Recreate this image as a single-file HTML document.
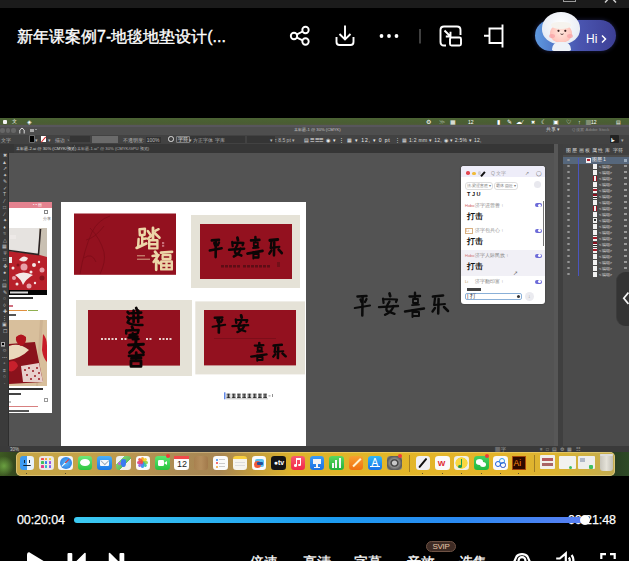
<!DOCTYPE html>
<html><head><meta charset="utf-8">
<style>
*{margin:0;padding:0;box-sizing:border-box}
html,body{width:629px;height:561px;overflow:hidden;background:#000;font-family:"Liberation Sans",sans-serif}
.a{position:absolute}
#top{left:0;top:0;width:629px;height:8px;background:#1b1b1b}
#title{left:17px;top:26.5px;color:#fff;font-size:16px;line-height:20px;white-space:nowrap;-webkit-text-stroke:0.35px #fff}
#ctrl{left:0;top:476px;width:629px;height:85px;background:#000}

#hi{left:530px;top:8px;width:90px;height:50px}
#hipill{left:5px;top:12px;width:81px;height:31px;border-radius:16px;background:linear-gradient(90deg,#5f9ae0 0%,#4f76c8 25%,#4a55b0 55%,#3d3f95 100%);box-shadow:0 0 4px rgba(80,90,200,.35)}
#hood{left:12px;top:4px;width:38px;height:32px;border-radius:50% 50% 45% 45%;background:radial-gradient(circle at 50% 40%,#ffffff,#e9edf5 70%,#cfd6e6)}
#face{left:20px;top:16px;width:22px;height:19px;border-radius:50%;background:radial-gradient(circle at 50% 45%,#ffe6dc,#ffc9c0 60%,#f6a8a6)}
#body{left:22px;top:34px;width:19px;height:9px;border-radius:8px 8px 2px 2px;background:#eef2f8}
#hitext{left:56px;top:24px;color:#fff;font-size:12px;line-height:14px}

#t1{left:17px;top:37px;color:#fff;font-size:12.5px;line-height:14px;letter-spacing:-0.1px;-webkit-text-stroke:0.25px #fff}
#t2{left:568px;top:37px;color:#fff;font-size:12.5px;line-height:14px;letter-spacing:-0.1px;-webkit-text-stroke:0.25px #fff}
#bar{left:74px;top:41px;width:512px;height:5.5px;border-radius:3px;background:linear-gradient(90deg,#3ccaf2 0%,#1c9cf0 50%,#2a8af2 75%,#5a7ef2 100%)}
#knob{left:579.5px;top:39px;width:10px;height:10px;border-radius:50%;background:#fff}
.lbl{top:78px;color:#fff;font-size:14px;line-height:16px;white-space:nowrap;-webkit-text-stroke:0.3px #fff}
#svip{left:426px;top:65px;width:30px;height:11px;border-radius:6px;background:#3e2b24;border:1px solid #6e5244;color:#e8c8a8;font-size:8px;line-height:9px;text-align:center;letter-spacing:-0.3px}

.mb{color:#fff;font-size:5.5px;line-height:8px}
.mbr{top:117.5px;color:#fff;font-size:5.5px;line-height:8px}
.dot{top:128px;width:4.5px;height:4.5px;border-radius:50%;background:#666}
.ob{top:136.5px;color:#b8b8b8;font-size:4.5px;line-height:6px}
.tiny{font-size:5px;line-height:6px;white-space:nowrap}
#dock{left:16px;top:452px;width:599px;height:23.5px;border-radius:5px;background:linear-gradient(90deg,#c6a645 0%,#c4a248 12%,#b89450 20%,#aa8a55 28%,#a88652 34%,#c49e3c 40%,#dcb22c 46%,#e2b628 60%,#e4b42a 80%,#dcb432 90%,#c2ac52 100%);box-shadow:inset 0 0 0 0.8px rgba(255,240,190,.45)}

.tog{left:73.5px;width:7px;height:4px;border-radius:2px;background:#6c6ad8}
.tog::after{content:"";position:absolute;left:3.5px;top:0.5px;width:3px;height:3px;border-radius:50%;background:#fff}

.di{top:455.5px;width:14.6px;height:14.6px;border-radius:3.3px;overflow:visible}
.badge{width:4px;height:4px;border-radius:50%;background:#f03a3a}
.tg{left:0.5px;width:8px;color:#c8c8c8;font-size:5px;line-height:5px;text-align:center;overflow:hidden}
</style></head><body>
<div class="a" id="top"></div>
<div class="a" style="left:563px;top:0;width:13px;height:2px;border:1px solid #9a9a9a;border-top:none"></div>
<svg class="a" style="left:600px;top:0" width="20" height="8"><path d="M10.5 -3.5 L5 2.5 M10.5 -3.5 L16 2.5" stroke="#ccc" stroke-width="1.5" fill="none"/></svg>

<svg class="a" style="left:0;top:0" width="629" height="118" viewBox="0 0 629 118">
  <g fill="none" stroke="#fff" stroke-width="1.9">
    <circle cx="294" cy="36" r="3.2"/><circle cx="305.5" cy="30" r="3.2"/><circle cx="305.5" cy="41.5" r="3.2"/>
    <path d="M297 34.3 L302.6 31.5 M297 37.7 L302.6 40.3"/>
    <path d="M345 25.5 V39.5 M339.5 34 L345 39.5 L350.5 34"/>
    <path d="M336.5 37 V42 Q336.5 45 339.5 45 H350.5 Q353.5 45 353.5 42 V37"/>
  </g>
  <g fill="#fff"><circle cx="381.5" cy="36" r="1.9"/><circle cx="389" cy="36" r="1.9"/><circle cx="396.5" cy="36" r="1.9"/></g>
  <rect x="419.3" y="29" width="1.4" height="14.5" fill="#5a5a5a"/>
  <g fill="none" stroke="#fff" stroke-width="1.9">
    <path d="M446 45.5 H444 Q440.5 45.5 440.5 42 V30 Q440.5 26.5 444 26.5 H457 Q460.5 26.5 460.5 30 V35"/>
    <rect x="450" y="37.5" width="11" height="8" rx="1.5"/>
    <path d="M444.5 30.5 L450.5 36.5 M450.5 31.8 V36.5 H445.8"/>
    <path d="M502.5 24.5 V47.5 M502.5 28.5 H489.5 V43 H502.5 M484 35.8 H489.5"/>
  </g>
</svg>
<div class="a" id="hi">
  <div class="a" id="hipill"></div>
  <div class="a" id="hood"></div>
  <div class="a" id="face"></div>
  <div class="a" id="body"></div>
  <div class="a" style="left:21px;top:14px;width:20px;height:7px;border-radius:40% 40% 50% 50%;background:#f6f3ee"></div>
  <div class="a" style="left:19px;top:26px;width:6px;height:4px;border-radius:50%;background:#f79aa0;opacity:.6"></div><div class="a" style="left:37px;top:26px;width:6px;height:4px;border-radius:50%;background:#f79aa0;opacity:.6"></div>
  <svg class="a" style="left:0;top:0" width="90" height="50" viewBox="0 0 90 50">
    <circle cx="28.5" cy="22.8" r="1.1" fill="#3a2020"/><circle cx="35.3" cy="22.8" r="1.1" fill="#3a2020"/>
    <path d="M30.5 25.8 Q32 27.3 33.5 25.8" stroke="#3a2020" stroke-width="0.8" fill="none"/>
  </svg>
  <div class="a" id="hitext">Hi</div>
  <svg class="a" style="left:0;top:0" width="90" height="50"><path d="M72 27.5 L75.5 31 L72 34.5" stroke="#fff" stroke-width="1.5" fill="none"/></svg>
</div>
<div class="a" id="title">新年课案例7-地毯地垫设计(...</div>

<div class="a" id="screen">
  <!-- menubar -->
  <div class="a" style="left:0;top:117.5px;width:629px;height:7.5px;background:linear-gradient(#4b6334,#4a5d32 70%,#4f5a3c)"></div>
  <div class="a" style="left:0;top:125px;width:629px;height:1.5px;background:#58565c"></div>
  <div class="a" style="left:3px;top:119.5px;width:3.5px;height:4px;border-radius:1px;background:#f4f4f4"></div>
  <div class="a mb" style="left:12px;top:118px;font-size:4.8px">文件</div>
  <div class="a mb" style="left:27px;top:117.5px;">&#9672;</div>
  <div class="a mbr" style="left:426px">&#9881;</div>
  <div class="a mbr" style="left:439px;color:#9aaa90">&#8811;</div>
  <div class="a mbr" style="left:450px">&#9638;</div>
  <div class="a mbr" style="left:468px;font-size:5px">12月12日</div>
  <div class="a mbr" style="left:497px">&#9646;</div>
  <div class="a mbr" style="left:507px">&#9998;</div>
  <div class="a mbr" style="left:516px">&#9729;&#8260;</div>
  <div class="a mbr" style="left:531px;font-size:5px">&#10006;</div>
  <div class="a mbr" style="left:541px">&#9790;</div>
  <div class="a mbr" style="left:553px">&#9635;</div>
  <div class="a mbr" style="left:566px">&#9825;</div>
  <div class="a mbr" style="left:578px">&#8593;</div>
  <div class="a mbr" style="left:586px;font-size:5px">&#9636;12月12</div>
  <div class="a mbr" style="left:616px;font-size:5px">&#9636;</div>
  <!-- title bar -->
  <div class="a" style="left:0;top:126.5px;width:629px;height:8px;background:#4e4e4e"></div>
  <div class="a dot" style="left:0px"></div><div class="a dot" style="left:5.5px"></div><div class="a dot" style="left:11px"></div>
  <svg class="a" style="left:18.5px;top:127px" width="6" height="7"><path d="M0.8 6.5 V3 L3 1 L5.2 3 V6.5" fill="none" stroke="#ddd" stroke-width="1"/></svg>
  <div class="a" style="left:29.5px;top:128.5px;width:4.5px;height:3.5px;background:#a8a8a8"></div>
  <div class="a" style="left:35px;top:129px;width:2px;height:1px;background:#999"></div>
  <div class="a tiny" style="left:294px;top:126.5px;color:#c8c8c8;font-size:4.2px">未标题-1 @ 30% (CMYK)</div>
  <div class="a tiny" style="left:546px;top:126.5px;color:#d8d8d8;font-size:4.5px">共享 &#9662;</div>
  <div class="a tiny" style="left:572px;top:126.5px;color:#8a8a8a;font-size:4.2px">Q 搜索 Adobe Stock</div>
  <!-- options bar -->
  <div class="a" style="left:0;top:134.5px;width:629px;height:9px;background:#424242"></div>
  <div class="a tiny ob" style="left:0.5px">文字</div>
  <div class="a" style="left:29.5px;top:136px;width:4px;height:6px;background:#000;box-shadow:0 0 0 0.6px #888"></div>
  <div class="a tiny ob" style="left:35px">&#9662;</div>
  <div class="a" style="left:41px;top:136px;width:5px;height:6px;background:#fff"></div>
  <div class="a" style="left:43.2px;top:135.5px;width:0.9px;height:7px;background:#d22;transform:rotate(40deg)"></div>
  <div class="a tiny ob" style="left:48px">&#9662;</div>
  <div class="a tiny ob" style="left:55px">描边 &#9684;</div>
  <div class="a" style="left:70px;top:136px;width:20px;height:6px;background:#353535"></div>
  <div class="a" style="left:92px;top:135.5px;width:26px;height:7.5px;background:#6a6a6a"></div>
  <div class="a tiny ob" style="left:123px">不透明度: <span style="background:#333;padding:0 1px">100%</span></div>
  <div class="a" style="left:168px;top:136px;width:5.5px;height:5.5px;border-radius:50%;border:1px solid #ddd"></div>
  <div class="a tiny ob" style="left:177px;box-shadow:0 0 0 0.6px #aaa;color:#eee;padding:0 1px;line-height:5px;top:136.5px">字符</div>
  <div class="a" style="left:190px;top:135.5px;width:55px;height:7px;background:#353535"></div>
  <div class="a tiny ob" style="left:189px">&#9662; 方正字体 字库</div>
  <div class="a" style="left:247px;top:135.5px;width:28px;height:7px;background:#353535"></div>
  <div class="a tiny ob" style="left:270px">&#9662; &#8597; 8.5 pt &#9662;</div>
  <div class="a tiny ob" style="left:304px;color:#eee;letter-spacing:0.8px">&#9636;&#9776;&#9776;&#9776; &#9673; &#9662; &#8942; &#9638; &#9662; 12, &#9662; 0 pt</div>
  <div class="a tiny ob" style="left:395px;color:#ddd;letter-spacing:0.3px">&#8942; &#9638; 1:2 mm &#9662; 12, &#9673; &#9662; 2:5% &#9662; 12,</div>
  <div class="a" style="left:610px;top:134.5px;width:9px;height:8px;background:#222;border-radius:1px"></div>
  <div class="a tiny ob" style="left:611px;color:#fff;font-weight:bold">I&#9656;</div>
  <div class="a tiny ob" style="left:621px;color:#aaa">&#9662;</div>
  <!-- tab bar -->
  <div class="a" style="left:0;top:143.5px;width:629px;height:9px;background:#363636"></div>
  <div class="a" style="left:14px;top:143.5px;width:58px;height:9px;background:#3a3a3a"></div>
  <div class="a tiny" style="left:16px;top:146px;color:#d8d8d8;font-size:4.2px">未标题-2.ai @ 30% (CMYK/预览)</div>
  <div class="a tiny" style="left:69px;top:146px;color:#aaa;font-size:4.2px">&#215;</div>
  <div class="a" style="left:74px;top:145px;width:0.6px;height:6px;background:#555"></div>
  <div class="a tiny" style="left:77px;top:146px;color:#b0b0b0;font-size:4.2px">未标题-1.ai* @ 30% (CMYK/GPU 预览)</div>
  <!-- canvas -->
  <div class="a" style="left:9px;top:152.5px;width:549px;height:293.5px;background:#535353"></div>
  <!-- tools -->
  <div class="a" style="left:0;top:152.5px;width:9px;height:293.5px;background:#3b3b3b;border-right:1px solid #2e2e2e"></div>
  <div class="a tg" style="top:153.0px">&#10006;</div>
  <div class="a tg" style="top:159.5px">&#9650;</div>
  <div class="a tg" style="top:166.0px">&#10138;</div>
  <div class="a tg" style="top:172.5px">&#10022;</div>
  <div class="a tg" style="top:179.0px">&#9998;</div>
  <div class="a tg" style="top:185.5px">&#10003;</div>
  <div class="a tg" style="top:192.0px">T</div>
  <div class="a tg" style="top:198.5px">&#8260;</div>
  <div class="a tg" style="top:205.0px">&#9633;</div>
  <div class="a tg" style="top:211.5px">&#8725;</div>
  <div class="a tg" style="top:218.0px">&#10022;</div>
  <div class="a tg" style="top:224.5px">&#9830;</div>
  <div class="a tg" style="top:231.0px">&#8776;</div>
  <div class="a tg" style="top:237.5px">&#9651;</div>
  <div class="a tg" style="top:244.0px">&#9638;</div>
  <div class="a tg" style="top:250.5px">&#8723;</div>
  <div class="a tg" style="top:257.0px">&#9633;</div>
  <div class="a tg" style="top:263.5px">&#10070;</div>
  <div class="a tg" style="top:270.0px">&#9679;</div>
  <div class="a tg" style="top:276.5px">&#8596;</div>
  <div class="a tg" style="top:283.0px">&#9636;</div>
  <div class="a tg" style="top:289.5px">&#9998;</div>
  <div class="a tg" style="top:296.0px">&#9675;</div>
  <div class="a tg" style="top:302.5px">&#9674;</div>
  <div class="a tg" style="top:309.0px">&#10010;</div>
  <div class="a tg" style="top:315.5px">&#8942;</div>
  <div class="a tg" style="top:322.0px">&#9635;</div>
  <div class="a tg" style="top:328.5px">&#9744;</div>
  <div class="a tg" style="top:348.0px">&#9786;</div>
  <div class="a tg" style="top:354.5px">&#8943;</div>
  <div class="a tg" style="top:361.0px">&#9643;</div>
  <div class="a tg" style="top:367.5px">&#8801;</div>
  <div class="a tg" style="top:374.0px">&#9675;</div>
  <div class="a tg" style="top:380.5px">&#183;</div>
  <div class="a" style="left:1px;top:343px;width:4px;height:4px;background:#fff;border:0.5px solid #888"></div>
  <div class="a" style="left:0.5px;top:341.5px;width:4px;height:4px;background:#000;border:0.5px solid #aaa"></div>

  <!-- left panel -->
  <div class="a" style="left:9px;top:202px;width:43px;height:211px;background:#fff"></div>
  <div class="a" style="left:9px;top:202px;width:43px;height:6px;background:#e4828f"></div>
  <div class="a tiny" style="left:33px;top:202px;color:#fff;font-size:4px">&#8226; &#8226; &#9636;</div>
  <div class="a" style="left:44px;top:210px;width:4px;height:4px;border:1px solid #888"></div>
  <div class="a tiny" style="left:43px;top:216px;color:#777;font-size:4px">分享</div>
  <svg class="a" style="left:9px;top:228px" width="38" height="67" viewBox="0 0 38 67">
    <rect width="38" height="62" fill="#dcd9d6"/>
    <path d="M30 0 H38 V62 H30Z" fill="#c9c0b2"/>
    <path d="M0 0 H30 L29 25 L0 21Z" fill="#e6e3e0"/>
    <path d="M0 23 L29 26.5 L38 29 V62 H0Z" fill="#b8202a"/>
    <path d="M0 22.5 L29.5 26.5 L31.5 1" fill="none" stroke="#2a2222" stroke-width="1.6"/>
    <g fill="#f4e8e6">
      <path d="M10 32 Q14 26 19 30 Q17 36 10 32Z"/>
      <path d="M0 29 h3 v6 h-3z"/>
      <path d="M6 47 Q14 42 24 47 Q17 51 14 57 Q12 51 6 47Z"/>
      <circle cx="22" cy="44" r="1.5"/><circle cx="25" cy="37" r="2"/><circle cx="4" cy="40" r="1.5"/>
      <circle cx="30" cy="34" r="1.2"/><circle cx="8" cy="56" r="1.5"/><circle cx="26" cy="55" r="1.2"/>
    </g>
    <g fill="#e8a0a8"><circle cx="15" cy="39" r="3.5"/><circle cx="33" cy="42" r="2.5"/><circle cx="20" cy="58" r="2.5"/><circle cx="5" cy="50" r="2"/></g>
    <g fill="#7e1018" opacity=".85"><circle cx="33" cy="50" r="2.5"/><circle cx="9" cy="37" r="1.5"/></g>
    <g fill="#f6f0f0" opacity=".45"><rect x="1" y="7" width="6" height="4"/></g>
    <rect y="62" width="38" height="5" fill="#050505"/>
    <rect x="1" y="63.5" width="18" height="2" fill="#d8d8d8"/>
  </svg>
  <div class="a" style="left:9px;top:297px;width:24px;height:2px;background:#333"></div>
  <div class="a" style="left:9px;top:305px;width:4px;height:1.5px;background:#d07080"></div>
  <div class="a" style="left:9px;top:309.5px;width:18px;height:1.5px;background:#e09040"></div>
  <div class="a" style="left:28px;top:309.5px;width:10px;height:1.5px;background:#90b050"></div>
  <div class="a" style="left:9px;top:314px;width:7px;height:1.5px;background:#555"></div>
  <svg class="a" style="left:9px;top:320px" width="38" height="67" viewBox="0 0 38 67">
    <rect width="38" height="66" fill="#d8bf9c"/>
    <path d="M31 0 L34 0 L29 66 H27Z" fill="#c4a888" opacity=".5"/>
    <path d="M0 24 L26 22 L34 62 L0 64 Z" fill="#8a121c"/>
    <path d="M0 26 Q10 22 20 30 Q12 38 0 40Z" fill="#ead8bc"/>
    <path d="M0 42 Q7 39 9 46 Q5 53 0 51Z" fill="#c8202c"/>
    <path d="M12 46 L30 43 L34 62 L14 62Z" fill="#e8d0cc"/>
    <g fill="#9a1822"><circle cx="16" cy="50" r="1"/><circle cx="20" cy="48" r="1"/><circle cx="24" cy="51" r="1"/><circle cx="28" cy="48" r="1"/><circle cx="18" cy="55" r="1"/><circle cx="26" cy="56" r="1"/><circle cx="22" cy="59" r="1"/><circle cx="30" cy="53" r="1"/><circle cx="30" cy="59" r="1"/></g>
    <path d="M7 17 Q12 12 17 17 Q18 24 12 26 Q6 23 7 17Z" fill="#b0141e"/>
    <path d="M34 14 Q38 18 38 26 V42 Q34 38 33 30Z" fill="#c81c28"/>
  </svg>
  <div class="a" style="left:9px;top:388px;width:34px;height:2px;background:#333"></div>
  <div class="a" style="left:9px;top:392.5px;width:12px;height:2px;background:#444"></div>
  <div class="a" style="left:44px;top:398px;width:4px;height:4px;border:1px solid #999"></div>
  <div class="a" style="left:9px;top:401px;width:2px;height:1.5px;background:#bbb"></div>
  <div class="a" style="left:9px;top:405.5px;width:29px;height:1.5px;background:#d88080"></div>
  <div class="a" style="left:9px;top:410px;width:20px;height:2px;background:#555"></div>

  <!-- artboard -->
  <div class="a" style="left:61px;top:202px;width:245px;height:244px;background:#fff"></div>
  <svg class="a" style="left:0;top:0" width="629" height="561" viewBox="0 0 629 561">
    <defs>
      <g id="pa" fill="none" stroke-linecap="round" stroke-linejoin="round">
        <path d="M3.5 5.5 L12.5 5" style="stroke-width:calc(var(--k,1)*3.24px)"/>
        <path d="M6.5 8.5 L7.5 11 M12.5 8 L11 11" style="stroke-width:calc(var(--k,1)*2.97px)"/>
        <path d="M0.8 17 L16 14.5" style="stroke-width:calc(var(--k,1)*2.70px)"/>
        <path d="M8.6 6 L8.3 24.5" style="stroke-width:calc(var(--k,1)*3.24px)"/>
        <path d="M35.5 2.5 L36.2 5.2" style="stroke-width:calc(var(--k,1)*3.51px)"/>
        <path d="M29 7.5 L29.6 12 M29.6 8 L43 8.5 L42 11" style="stroke-width:calc(var(--k,1)*2.84px)"/>
        <path d="M25 16.2 L44 15" style="stroke-width:calc(var(--k,1)*2.97px)"/>
        <path d="M35.5 10.5 Q31 17 33 20 L40.5 22.8" style="stroke-width:calc(var(--k,1)*2.97px)"/>
        <path d="M39.5 15 Q38 21 31 23.8" style="stroke-width:calc(var(--k,1)*2.97px)"/>
      </g>
      <g id="xl" fill="none" stroke-linecap="round" stroke-linejoin="round">
        <path d="M11 1.8 L11 6 M5.5 5.5 L16 5" style="stroke-width:calc(var(--k,1)*3.10px)"/>
        <path d="M9 8 h5 v4 h-5z" style="stroke-width:calc(var(--k,1)*2.29px)"/>
        <path d="M8 14.2 L15 13.6" style="stroke-width:calc(var(--k,1)*2.29px)"/>
        <path d="M1 20.5 L20 17.5" style="stroke-width:calc(var(--k,1)*3.10px)"/>
        <path d="M8.5 19 V26 M8.5 21 H15 V25 H9" style="stroke-width:calc(var(--k,1)*2.56px)"/>
        <path d="M29 5.5 L39 4.5" style="stroke-width:calc(var(--k,1)*3.51px)"/>
        <path d="M31 7 L30.2 14" style="stroke-width:calc(var(--k,1)*2.84px)"/>
        <path d="M30.2 14 L41 13" style="stroke-width:calc(var(--k,1)*2.56px)"/>
        <path d="M34.6 8 L34.2 22.5" style="stroke-width:calc(var(--k,1)*3.24px)"/>
        <path d="M28.5 20.5 L31 17" style="stroke-width:calc(var(--k,1)*3.10px)"/>
        <path d="M40 16 L44 20" style="stroke-width:calc(var(--k,1)*3.24px)"/>
      </g>
    </defs>
    <!-- card 1 -->
    <rect x="74" y="213.5" width="102" height="61.3" fill="#93111f"/>
    <g fill="none" stroke="#7e0c18" stroke-width="0.94" opacity=".9">
      <path d="M80 274 Q84 250 92 232 Q98 220 110 216 M86 240 Q95 238 104 226 M90 228 Q100 238 104 252 Q106 262 100 274 M84 258 Q92 252 96 262"/>
    </g>
    <g fill="none" stroke="#ecd6a8" stroke-linecap="round" stroke-linejoin="round">
      <path d="M139.5 229.2 L145 228.8 L144.6 234.8 L139.8 235.2 Z" stroke-width="2.4"/>
      <path d="M142.2 235.5 V244 M142.6 239 L146 238.5" stroke-width="2.4"/>
      <path d="M138.6 239 L138.2 246" stroke-width="2.5"/>
      <path d="M136.8 247.8 L146.2 243.5" stroke-width="3"/>
      <path d="M153 228 V239" stroke-width="2.8"/>
      <path d="M147.8 231 L151 235.5 M155.2 230.8 L158.6 229.2" stroke-width="2.5"/>
      <path d="M154.6 233 L159.5 237.8 M148 238.6 L151.5 235.5" stroke-width="2.6"/>
      <path d="M149.2 240.2 H157.4 V248.4 H149.2 Z M149.6 244.2 H157" stroke-width="2.4"/>
      <path d="M155 251.8 L156.6 253.6" stroke-width="2.8"/>
      <path d="M152.6 256 L158.6 255 L153.6 262" stroke-width="2.5"/>
      <path d="M156.2 259 V269.8 M157.6 261 L159.2 263.2" stroke-width="2.7"/>
      <path d="M161 252.6 L172 251.9" stroke-width="2.8"/>
      <path d="M162.6 255.2 H170.4 V259 H162.6 Z" stroke-width="2.3"/>
      <path d="M161.2 261.5 H171.8 V269.4 H161.2 Z M166.5 261.5 V269.4 M161.6 265.5 H171.4" stroke-width="2.4"/>
    </g>
    <g fill="#ecd6a8" opacity=".75"><rect x="137" y="255.3" width="8" height="1"/><rect x="137" y="258.7" width="13" height="1"/></g>
    <g fill="#c8707a"><rect x="162" y="242" width="2.2" height="2"/><rect x="162" y="244.8" width="2.2" height="2"/></g>
    <!-- card 2 -->
    <rect x="191" y="215" width="109" height="73" fill="#e5e2d7"/>
    <rect x="200" y="224" width="92" height="55" fill="#93111f"/>
    <g stroke="#0d0606" transform="translate(209 235.5) scale(0.8 0.88)"><use href="#pa"/><use href="#xl" x="47"/></g>
    <g fill="#2a0a0c" opacity=".5"><rect x="221" y="265" width="3" height="2.5"/><rect x="225" y="265" width="3" height="2.5"/><rect x="229" y="265" width="3" height="2.5"/><rect x="233" y="265" width="3" height="2.5"/><rect x="237" y="265" width="3" height="2.5"/><rect x="243" y="265" width="3" height="2.5"/><rect x="247" y="265" width="3" height="2.5"/><rect x="251" y="265" width="3" height="2.5"/><rect x="255" y="265" width="3" height="2.5"/><rect x="259" y="265" width="3" height="2.5"/><rect x="263" y="265" width="3" height="2.5"/><rect x="267" y="265" width="3" height="2.5"/></g>
    <rect x="277" y="262" width="3" height="5" fill="#5a1014" opacity=".6"/>
    <!-- card 3 -->
    <rect x="76" y="300" width="116" height="76" fill="#e5e2d7"/>
    <rect x="88" y="310" width="92" height="55.6" fill="#93111f"/>
    <g fill="#f2e6e0" opacity=".9"><rect x="101.0" y="338" width="2" height="2"/><rect x="104.5" y="338" width="2" height="2"/><rect x="108.0" y="338" width="2" height="2"/><rect x="111.5" y="338" width="2" height="2"/><rect x="115.0" y="338" width="2" height="2"/><rect x="121.0" y="338" width="2" height="2"/><rect x="124.5" y="338" width="2" height="2"/><rect x="146.0" y="338" width="2" height="2"/><rect x="149.5" y="338" width="2" height="2"/><rect x="159.0" y="338" width="2" height="2"/><rect x="162.5" y="338" width="2" height="2"/><rect x="166.0" y="338" width="2" height="2"/><rect x="169.5" y="338" width="2" height="2"/></g>
    <g fill="none" stroke="#0a0505" stroke-linecap="round" stroke-linejoin="round">
      <path d="M136.2 308 L137.2 310.5" stroke-width="2.8"/>
      <path d="M131 313.2 L141.2 312.6 M130.2 318.2 L142.2 317.4 M133.6 310.5 V322 M138.2 310.5 V322" stroke-width="2.6"/>
      <path d="M127.6 312 L129 313.5 M127.4 317 L129.4 319 L127.6 322.5 Q132 325.5 142.4 325" stroke-width="2.6"/>
      <path d="M132 326.8 L132.8 328.6" stroke-width="2.8"/>
      <path d="M126.2 330.5 V333.4 M126.5 330.6 L138.6 330 L137.8 333" stroke-width="2.5"/>
      <path d="M129.5 335 L136.5 334 M128.5 337.5 L137.5 336.6 M132.8 333.2 V339.2 L138.5 339" stroke-width="2.5"/>
      <path d="M128.6 345 L143.4 344.2" stroke-width="3"/>
      <path d="M136 339.6 Q136.5 348 129.6 352.6 M136.4 345.6 L143.4 352.4" stroke-width="3"/>
      <path d="M129 355.8 L143.4 354.8 M136.2 352.6 V359.2 M131.5 358.4 L141 358" stroke-width="2.8"/>
      <path d="M131 360.8 H141 V366.4 H131 Z" stroke-width="2.8"/>
    </g>
    <!-- card 4 -->
    <rect x="195.3" y="301.4" width="109.7" height="73" fill="#e5e2d7"/>
    <rect x="204" y="310" width="92" height="55.4" fill="#93111f"/>
    <g stroke="#0d0606" transform="translate(212 313.5) scale(0.82 0.78)"><use href="#pa"/></g>
    <g stroke="#0d0606" transform="translate(250.5 341.5) scale(0.8 0.74)"><use href="#xl"/></g>
        <rect x="214" y="338" width="62" height="0.8" fill="#3a0a0c" opacity=".3"/>
    <!-- bottom caption -->
    <rect x="224.2" y="392.3" width="1.2" height="7" fill="#3a6ae0"/>
    <g stroke="#222" stroke-width="0.9" fill="none"><path d="M226.5 394.2 h3.8 M226.5 396 h3.8 M226.5 397.6 h3.8 M228.4 393.8 v4.2" /><path d="M231.8 394.2 h3.8 M231.8 396 h3.8 M231.8 397.6 h3.8 M233.7 393.8 v4.2" /><path d="M237.0 394.2 h3.8 M237.0 396 h3.8 M237.0 397.6 h3.8 M238.9 393.8 v4.2" /><path d="M242.2 394.2 h3.8 M242.2 396 h3.8 M242.2 397.6 h3.8 M244.2 393.8 v4.2" /><path d="M247.5 394.2 h3.8 M247.5 396 h3.8 M247.5 397.6 h3.8 M249.4 393.8 v4.2" /><path d="M252.8 394.2 h3.8 M252.8 396 h3.8 M252.8 397.6 h3.8 M254.7 393.8 v4.2" /><path d="M258.0 394.2 h3.8 M258.0 396 h3.8 M258.0 397.6 h3.8 M259.9 393.8 v4.2" /><path d="M263.2 394.2 h3.8 M263.2 396 h3.8 M263.2 397.6 h3.8 M265.1 393.8 v4.2" /></g>
    <rect x="226" y="398.6" width="42" height="0.6" fill="#999"/>
    <rect x="268.5" y="395.5" width="2" height="0.8" fill="#777"/><rect x="272" y="394" width="0.8" height="3" fill="#777"/>
    <!-- canvas text -->
    <g stroke="#0b0b0b" style="--k:0.78" transform="translate(354 291)"><use href="#pa"/><use href="#xl" x="50"/></g>
  </svg>

  <!-- floating panel -->
  <div class="a" style="left:461px;top:166px;width:84px;height:137.5px;background:#fff;border-radius:3px;box-shadow:0 0 2px rgba(0,0,0,.35);overflow:hidden">
    <div class="a" style="left:0;top:0;width:84px;height:11px;background:#eeedf9"></div>
    <div class="a" style="left:5px;top:5.2px;width:3.6px;height:3.6px;border-radius:50%;background:#e2454f"></div>
    <div class="a" style="left:11.2px;top:5.6px;width:3.6px;height:3.6px;border-radius:50%;background:#f0bb3a"></div>
    <div class="a" style="left:16.5px;top:5.2px;width:3.6px;height:3.6px;border-radius:50%;background:#cfcfd8"></div>
    <div class="a" style="left:21px;top:4.5px;width:1.6px;height:6px;background:#111;transform:rotate(40deg)"></div>
    <div class="a tiny" style="left:30px;top:4px;color:#999;font-size:5px">Q 文字</div>
    <div class="a tiny" style="left:64px;top:4px;color:#888;font-size:5px">&#8599;</div>
    <div class="a tiny" style="left:75px;top:4px;color:#555;font-size:5px">&#9711;</div>
    <div class="a tiny" style="left:4px;top:16px;color:#777;font-size:4px;border:0.5px solid #ddd;border-radius:3px;padding:0 1px">法-梁涩富胜 &#9662;</div>
    <div class="a tiny" style="left:33px;top:16px;color:#777;font-size:4px;border:0.5px solid #ddd;border-radius:3px;padding:0 1px">霸体 圆匠 &#9662;</div>
    <div class="a" style="left:73px;top:15px;width:7px;height:7px;border-radius:50%;background:#e8e8ee"></div>
    <div class="a tiny" style="left:6px;top:25px;color:#111;font-size:5.5px;font-weight:bold;line-height:7px">T J  U</div>
    <div class="a" style="left:0;top:84px;width:84px;height:26px;background:#f1f0f6"></div>
    <div class="item" style="top:33px"></div>
    <div class="a tiny" style="left:4px;top:37px;color:#d06060;font-size:4px">Hobo</div>
    <div class="a tiny" style="left:14px;top:37px;color:#888;font-size:4.5px">济字进营善 &#8593;</div>
    <div class="a tiny" style="left:6px;top:46px;color:#111;font-size:8px;font-weight:bold;line-height:10px">打击</div>
    <div class="a tiny" style="left:4px;top:62px;color:#d09040;font-size:4px;border:0.5px solid #d8b080;width:8px;line-height:4px">Li</div>
    <div class="a tiny" style="left:14px;top:62px;color:#888;font-size:4.5px">济字包兵心 &#8593;</div>
    <div class="a tiny" style="left:6px;top:71px;color:#111;font-size:8px;font-weight:bold;line-height:10px">打击</div>
    <div class="a tiny" style="left:4px;top:87px;color:#d07070;font-size:4px">Hobo</div>
    <div class="a tiny" style="left:14px;top:87px;color:#888;font-size:4.5px">济字人际民族 &#8593;</div>
    <div class="a tiny" style="left:6px;top:96px;color:#111;font-size:8px;font-weight:bold;line-height:10px">打击</div>
    <div class="a tiny" style="left:4px;top:113px;color:#c0a060;font-size:4px">Li</div>
    <div class="a tiny" style="left:14px;top:113px;color:#888;font-size:4.5px">济字翻印富 &#8593;</div>
    <div class="a" style="left:6px;top:122px;width:14px;height:3px;background:#444"></div><div class="a tiny" style="left:52px;top:104px;color:#777;font-size:6px">&#10138;</div>
    <div class="a tog" style="top:37px"></div><div class="a tog" style="top:62.5px"></div><div class="a tog" style="top:87.5px"></div><div class="a tog" style="top:113.5px"></div>
    <div class="a" style="left:81.5px;top:35px;width:1.2px;height:45px;background:#777"></div>
    <div class="a" style="left:3.5px;top:126.5px;width:57px;height:7.5px;border:0.8px solid #8ab0d8;border-radius:2px;background:#fff"></div>
    <div class="a tiny" style="left:6px;top:127px;color:#333;font-size:5.5px">| 打</div>
    <div class="a" style="left:56px;top:129px;width:3px;height:3px;border-radius:50%;background:#333"></div>
    <div class="a" style="left:64px;top:126px;width:9px;height:9px;border-radius:50%;background:#ebebf0"></div>
    <div class="a tiny" style="left:67px;top:127px;color:#999;font-size:5px">&#8595;</div>
  </div>
  <!-- divider + layers -->
  <div class="a" style="left:554px;top:144px;width:4px;height:302px;background:#575757"></div>
  <div class="a" style="left:558px;top:144px;width:5px;height:302px;background:#3f3f3f"></div>
  <div class="a" style="left:563px;top:144px;width:66px;height:302px;background:#4b4b4b"></div>
  <div class="a" style="left:563px;top:144px;width:66px;height:11px;background:#404040"></div>
  <div class="a tiny" style="left:566px;top:148px;color:#ddd;font-size:4.5px;letter-spacing:0.6px">图层 画板 属性 库 字符</div>
  <div class="a" style="left:563px;top:157.4px;width:66px;height:6.2px;background:#56677c"></div>
  <div class="a" style="left:577.5px;top:158px;width:1.5px;height:118px;background:#4a55c0"></div>
  <div class="a" style="left:566.5px;top:159.4px;width:3px;height:2px;border-radius:50%;background:#9a9a9a"></div>
  <div class="a" style="left:586px;top:158.4px;width:4.5px;height:4.5px;background:#f4f0f0"></div>
  <div class="a" style="left:587px;top:159.4px;width:2.5px;height:1.5px;background:#b02030"></div>
  <div class="a tiny" style="left:592px;top:157.4px;color:#eee;font-size:4.5px">图层 1</div>
  <div class="a" style="left:624px;top:158.9px;width:3px;height:3px;background:#9ab"></div>
  <div class="a" style="left:566.5px;top:165.4px;width:3px;height:2px;border-radius:50%;background:#9a9a9a"></div>
  <div class="a" style="left:592.5px;top:164.2px;width:4.5px;height:4.5px;background:#f2f2f2"></div>
  <div class="a tiny" style="left:599px;top:163.6px;color:#ddd;font-size:4.3px">&lt;编组&gt;</div>
  <div class="a" style="left:624px;top:165.4px;width:3px;height:2px;border:0.5px solid #999"></div>
  <div class="a" style="left:566.5px;top:171.4px;width:3px;height:2px;border-radius:50%;background:#9a9a9a"></div>
  <div class="a" style="left:592.5px;top:170.2px;width:4.5px;height:4.5px;background:#f2f2f2"></div>
  <div class="a tiny" style="left:599px;top:169.6px;color:#ddd;font-size:4.3px">&lt;编组&gt;</div>
  <div class="a" style="left:624px;top:171.4px;width:3px;height:2px;border:0.5px solid #999"></div>
  <div class="a" style="left:566.5px;top:177.4px;width:3px;height:2px;border-radius:50%;background:#9a9a9a"></div>
  <div class="a" style="left:592.5px;top:176.2px;width:4.5px;height:4.5px;background:#f2f2f2"></div>
  <div class="a" style="left:593px;top:176.2px;width:1px;height:4.5px;background:#a01020"></div><div class="a" style="left:596px;top:176.2px;width:1px;height:4.5px;background:#a01020"></div>
  <div class="a tiny" style="left:599px;top:175.6px;color:#ddd;font-size:4.3px">&lt;编组&gt;</div>
  <div class="a" style="left:624px;top:177.4px;width:3px;height:2px;border:0.5px solid #999"></div>
  <div class="a" style="left:566.5px;top:183.4px;width:3px;height:2px;border-radius:50%;background:#9a9a9a"></div>
  <div class="a" style="left:592.5px;top:182.2px;width:4.5px;height:4.5px;background:#f2f2f2"></div>
  <div class="a tiny" style="left:599px;top:181.6px;color:#ddd;font-size:4.3px">&lt;编组&gt;</div>
  <div class="a" style="left:624px;top:183.4px;width:3px;height:2px;border:0.5px solid #999"></div>
  <div class="a" style="left:566.5px;top:189.4px;width:3px;height:2px;border-radius:50%;background:#9a9a9a"></div>
  <div class="a" style="left:592.5px;top:188.2px;width:4.5px;height:4.5px;background:#f2f2f2"></div>
  <div class="a" style="left:592.5px;top:189.4px;width:4.5px;height:2px;background:#a81a28"></div>
  <div class="a tiny" style="left:599px;top:187.6px;color:#ddd;font-size:4.3px">&lt;编组&gt;</div>
  <div class="a" style="left:624px;top:189.4px;width:3px;height:2px;border:0.5px solid #999"></div>
  <div class="a" style="left:566.5px;top:195.4px;width:3px;height:2px;border-radius:50%;background:#9a9a9a"></div>
  <div class="a" style="left:592.5px;top:194.2px;width:4.5px;height:4.5px;background:#f2f2f2"></div>
  <div class="a" style="left:592.5px;top:194.4px;width:4.5px;height:1.5px;background:#8a1020"></div><div class="a" style="left:592.5px;top:196.9px;width:4.5px;height:1px;background:#222"></div>
  <div class="a tiny" style="left:599px;top:193.6px;color:#ddd;font-size:4.3px">&lt;编组&gt;</div>
  <div class="a" style="left:624px;top:195.4px;width:3px;height:2px;border:0.5px solid #999"></div>
  <div class="a" style="left:566.5px;top:201.4px;width:3px;height:2px;border-radius:50%;background:#9a9a9a"></div>
  <div class="a" style="left:592.5px;top:200.2px;width:4.5px;height:4.5px;background:#f2f2f2"></div>
  <div class="a tiny" style="left:599px;top:199.6px;color:#ddd;font-size:4.3px">&lt;编组&gt;</div>
  <div class="a" style="left:624px;top:201.4px;width:3px;height:2px;border:0.5px solid #999"></div>
  <div class="a" style="left:566.5px;top:207.4px;width:3px;height:2px;border-radius:50%;background:#9a9a9a"></div>
  <div class="a" style="left:592.5px;top:206.2px;width:4.5px;height:4.5px;background:#f2f2f2"></div>
  <div class="a" style="left:593px;top:206.2px;width:1px;height:4.5px;background:#a01020"></div><div class="a" style="left:596px;top:206.2px;width:1px;height:4.5px;background:#a01020"></div>
  <div class="a tiny" style="left:599px;top:205.6px;color:#ddd;font-size:4.3px">&lt;编组&gt;</div>
  <div class="a" style="left:624px;top:207.4px;width:3px;height:2px;border:0.5px solid #999"></div>
  <div class="a" style="left:566.5px;top:213.4px;width:3px;height:2px;border-radius:50%;background:#9a9a9a"></div>
  <div class="a" style="left:592.5px;top:212.2px;width:4.5px;height:4.5px;background:#f2f2f2"></div>
  <div class="a tiny" style="left:599px;top:211.6px;color:#ddd;font-size:4.3px">&lt;编组&gt;</div>
  <div class="a" style="left:624px;top:213.4px;width:3px;height:2px;border:0.5px solid #999"></div>
  <div class="a" style="left:566.5px;top:219.4px;width:3px;height:2px;border-radius:50%;background:#9a9a9a"></div>
  <div class="a" style="left:592.5px;top:218.2px;width:4.5px;height:4.5px;background:#f2f2f2"></div>
  <div class="a" style="left:593.5px;top:218.9px;width:2.5px;height:2px;background:#333"></div>
  <div class="a tiny" style="left:599px;top:217.6px;color:#ddd;font-size:4.3px">&lt;编组&gt;</div>
  <div class="a" style="left:624px;top:219.4px;width:3px;height:2px;border:0.5px solid #999"></div>
  <div class="a" style="left:566.5px;top:225.4px;width:3px;height:2px;border-radius:50%;background:#9a9a9a"></div>
  <div class="a" style="left:592.5px;top:224.2px;width:4.5px;height:4.5px;background:#f2f2f2"></div>
  <div class="a tiny" style="left:599px;top:223.6px;color:#ddd;font-size:4.3px">&lt;编组&gt;</div>
  <div class="a" style="left:624px;top:225.4px;width:3px;height:2px;border:0.5px solid #999"></div>
  <div class="a" style="left:566.5px;top:231.4px;width:3px;height:2px;border-radius:50%;background:#9a9a9a"></div>
  <div class="a" style="left:592.5px;top:230.2px;width:4.5px;height:4.5px;background:#f2f2f2"></div>
  <div class="a tiny" style="left:599px;top:229.6px;color:#ddd;font-size:4.3px">&lt;编组&gt;</div>
  <div class="a" style="left:624px;top:231.4px;width:3px;height:2px;border:0.5px solid #999"></div>
  <div class="a" style="left:566.5px;top:237.4px;width:3px;height:2px;border-radius:50%;background:#9a9a9a"></div>
  <div class="a" style="left:592.5px;top:236.2px;width:4.5px;height:4.5px;background:#f2f2f2"></div>
  <div class="a" style="left:592.5px;top:237.4px;width:4.5px;height:2px;background:#a81a28"></div>
  <div class="a tiny" style="left:599px;top:235.6px;color:#ddd;font-size:4.3px">&lt;编组&gt;</div>
  <div class="a" style="left:624px;top:237.4px;width:3px;height:2px;border:0.5px solid #999"></div>
  <div class="a" style="left:566.5px;top:243.4px;width:3px;height:2px;border-radius:50%;background:#9a9a9a"></div>
  <div class="a" style="left:592.5px;top:242.2px;width:4.5px;height:4.5px;background:#f2f2f2"></div>
  <div class="a" style="left:592.5px;top:242.4px;width:4.5px;height:1.5px;background:#8a1020"></div><div class="a" style="left:592.5px;top:244.9px;width:4.5px;height:1px;background:#222"></div>
  <div class="a tiny" style="left:599px;top:241.6px;color:#ddd;font-size:4.3px">&lt;编组&gt;</div>
  <div class="a" style="left:624px;top:243.4px;width:3px;height:2px;border:0.5px solid #999"></div>
  <div class="a" style="left:566.5px;top:249.4px;width:3px;height:2px;border-radius:50%;background:#9a9a9a"></div>
  <div class="a" style="left:592.5px;top:248.2px;width:4.5px;height:4.5px;background:#f2f2f2"></div>
  <div class="a" style="left:592.5px;top:249.4px;width:4.5px;height:2px;background:#a81a28"></div>
  <div class="a tiny" style="left:599px;top:247.6px;color:#ddd;font-size:4.3px">&lt;编组&gt;</div>
  <div class="a" style="left:624px;top:249.4px;width:3px;height:2px;border:0.5px solid #999"></div>
  <div class="a" style="left:566.5px;top:255.4px;width:3px;height:2px;border-radius:50%;background:#9a9a9a"></div>
  <div class="a" style="left:592.5px;top:254.2px;width:4.5px;height:4.5px;background:#f2f2f2"></div>
  <div class="a tiny" style="left:599px;top:253.6px;color:#ddd;font-size:4.3px">&lt;编组&gt;</div>
  <div class="a" style="left:624px;top:255.4px;width:3px;height:2px;border:0.5px solid #999"></div>
  <div class="a" style="left:566.5px;top:261.4px;width:3px;height:2px;border-radius:50%;background:#9a9a9a"></div>
  <div class="a" style="left:592.5px;top:260.2px;width:4.5px;height:4.5px;background:#f2f2f2"></div>
  <div class="a tiny" style="left:599px;top:259.6px;color:#ddd;font-size:4.3px">&lt;编组&gt;</div>
  <div class="a" style="left:624px;top:261.4px;width:3px;height:2px;border:0.5px solid #999"></div>
  <div class="a" style="left:566.5px;top:267.4px;width:3px;height:2px;border-radius:50%;background:#9a9a9a"></div>
  <div class="a" style="left:592.5px;top:266.2px;width:4.5px;height:4.5px;background:#f2f2f2"></div>
  <div class="a tiny" style="left:599px;top:265.6px;color:#ddd;font-size:4.3px">&lt;编组&gt;</div>
  <div class="a" style="left:624px;top:267.4px;width:3px;height:2px;border:0.5px solid #999"></div>
  <div class="a" style="left:566.5px;top:273.4px;width:3px;height:2px;border-radius:50%;background:#9a9a9a"></div>
  <div class="a" style="left:592.5px;top:272.2px;width:4.5px;height:4.5px;background:#f2f2f2"></div>
  <div class="a tiny" style="left:599px;top:271.6px;color:#ddd;font-size:4.3px">&lt;编组&gt;</div>
  <div class="a" style="left:624px;top:273.4px;width:3px;height:2px;border:0.5px solid #999"></div>

  <div class="a" style="left:617px;top:272px;width:20px;height:54px;border-radius:9px;background:#343434;box-shadow:-1px 0 0 #3c3c3c"></div>
  <svg class="a" style="left:617px;top:272px" width="12" height="54"><path d="M11.5 20.5 L6.8 26.2 L11.5 32" fill="none" stroke="#f2f2f2" stroke-width="1.8"/></svg>
  <!-- status bar -->
  <div class="a" style="left:0;top:446px;width:629px;height:6px;background:#3a3a3a"></div>
  <div class="a tiny" style="left:10px;top:446.5px;color:#ccc;font-size:4.5px">30%</div><div class="a tiny" style="left:495px;top:446.5px;color:#aaa;font-size:4.5px">&#9638; 字</div><div class="a tiny" style="left:540px;top:446.5px;color:#aaa;font-size:4.5px;letter-spacing:1px">&#8801; &#9633; &#9636; &#9881; &#9638; &#9783;</div>
  <!-- dock -->
  <div class="a" style="left:0;top:452px;width:629px;height:24px;background:linear-gradient(90deg,#3d5a22,#2e3a1c 4%,#262e1a 30%,#262a1c 70%,#24321e 95%,#2e4a26)"></div>
  <div class="a" style="left:-6px;top:456px;width:20px;height:20px;border-radius:50%;background:radial-gradient(#6aa040,rgba(60,90,30,0) 70%)"></div>
  <div class="a" id="dock"></div>
  <div class="a di" style="left:19.6px;background:linear-gradient(90deg,#3d9af0 50%,#e8f2fa 50%);"><div class="a" style="left:4px;top:4px;width:1.5px;height:3px;background:#123"></div><div class="a" style="left:9px;top:4px;width:1.5px;height:3px;background:#123"></div><div class="a" style="left:3px;top:9.5px;width:8.6px;height:1.2px;border-radius:0 0 4px 4px;background:#123"></div></div>
  <div class="a di" style="left:39.0px;background:#eceae6;"><div class="a" style="left:2.3px;top:2.3px;width:2.6px;height:2.6px;border-radius:0.6px;background:#f05050"></div><div class="a" style="left:5.9px;top:2.3px;width:2.6px;height:2.6px;border-radius:0.6px;background:#f0a030"></div><div class="a" style="left:9.5px;top:2.3px;width:2.6px;height:2.6px;border-radius:0.6px;background:#f5d030"></div><div class="a" style="left:2.3px;top:5.9px;width:2.6px;height:2.6px;border-radius:0.6px;background:#40c060"></div><div class="a" style="left:5.9px;top:5.9px;width:2.6px;height:2.6px;border-radius:0.6px;background:#3080f0"></div><div class="a" style="left:9.5px;top:5.9px;width:2.6px;height:2.6px;border-radius:0.6px;background:#a050e0"></div><div class="a" style="left:2.3px;top:9.5px;width:2.6px;height:2.6px;border-radius:0.6px;background:#e04090"></div><div class="a" style="left:5.9px;top:9.5px;width:2.6px;height:2.6px;border-radius:0.6px;background:#30c0c0"></div><div class="a" style="left:9.5px;top:9.5px;width:2.6px;height:2.6px;border-radius:0.6px;background:#8060f0"></div></div>
  <div class="a di" style="left:58.3px;background:#f4f6f8;"><div class="a" style="left:1.3px;top:1.3px;width:12px;height:12px;border-radius:50%;background:radial-gradient(#5ab8f8,#2070e0)"></div><div class="a" style="left:6.8px;top:2.5px;width:1.2px;height:9.6px;background:linear-gradient(#f03030 50%,#fff 50%);transform:rotate(45deg)"></div></div>
  <div class="a di" style="left:77.7px;background:linear-gradient(#6ee87a,#2cc640);"><div class="a" style="left:2.5px;top:3.5px;width:9.6px;height:7px;border-radius:50%;background:#fff"></div></div>
  <div class="a di" style="left:97.0px;background:linear-gradient(#4ab0fa,#1a78e8);"><div class="a" style="left:2.5px;top:4px;width:9.6px;height:6.5px;background:#f4f8fc;border-radius:1px"></div><div class="a" style="left:4.5px;top:2.6px;width:5.6px;height:5.6px;border-right:1px solid #9ab;border-bottom:1px solid #9ab;transform:rotate(45deg)"></div></div>
  <div class="a di" style="left:116.3px;background:linear-gradient(135deg,#f0f0f0 30%,#7cd070 30%,#60c060 60%,#f4f0e8 60%);"><div class="a" style="left:5px;top:3px;width:4.5px;height:8px;background:#3a7af0;border-radius:2px 2px 50% 50%"></div><div class="a" style="left:2px;top:6px;width:3px;height:3px;background:#c060e0;border-radius:50%"></div></div>
  <div class="a di" style="left:135.7px;background:#fbfbfb;"><div class="a" style="left:5.8px;top:1.8px;width:3px;height:5.5px;border-radius:1.5px;background:#f5a020;transform-origin:1.5px 5.5px;transform:rotate(0deg);opacity:.9"></div><div class="a" style="left:5.8px;top:1.8px;width:3px;height:5.5px;border-radius:1.5px;background:#f0d020;transform-origin:1.5px 5.5px;transform:rotate(45deg);opacity:.9"></div><div class="a" style="left:5.8px;top:1.8px;width:3px;height:5.5px;border-radius:1.5px;background:#90d040;transform-origin:1.5px 5.5px;transform:rotate(90deg);opacity:.9"></div><div class="a" style="left:5.8px;top:1.8px;width:3px;height:5.5px;border-radius:1.5px;background:#30c0a0;transform-origin:1.5px 5.5px;transform:rotate(135deg);opacity:.9"></div><div class="a" style="left:5.8px;top:1.8px;width:3px;height:5.5px;border-radius:1.5px;background:#3090f0;transform-origin:1.5px 5.5px;transform:rotate(180deg);opacity:.9"></div><div class="a" style="left:5.8px;top:1.8px;width:3px;height:5.5px;border-radius:1.5px;background:#9060e0;transform-origin:1.5px 5.5px;transform:rotate(225deg);opacity:.9"></div><div class="a" style="left:5.8px;top:1.8px;width:3px;height:5.5px;border-radius:1.5px;background:#e04080;transform-origin:1.5px 5.5px;transform:rotate(270deg);opacity:.9"></div><div class="a" style="left:5.8px;top:1.8px;width:3px;height:5.5px;border-radius:1.5px;background:#f05040;transform-origin:1.5px 5.5px;transform:rotate(315deg);opacity:.9"></div></div>
  <div class="a di" style="left:155.1px;background:linear-gradient(#5ce870,#26c23e);"><div class="a" style="left:2.5px;top:4.5px;width:6.5px;height:5.5px;border-radius:1.3px;background:#fff"></div><div class="a" style="left:9px;top:5.5px;width:0;height:0;border-top:2px solid transparent;border-bottom:2px solid transparent;border-right:3px solid #fff"></div><div class="a badge" style="left:11px;top:-1.5px"></div></div>
  <div class="a di" style="left:174.4px;background:#fdfdfd;"><div class="a" style="left:0;top:0;width:14.6px;height:3.5px;background:#f04a4a"></div><div class="a" style="left:2.5px;top:3.8px;font-size:9px;line-height:10px;color:#222;font-family:'Liberation Sans',sans-serif">12</div></div>
  <div class="a di" style="left:193.8px;background:linear-gradient(90deg,#a87e4e,#b89060,#a07448);opacity:.75"></div>
  <div class="a di" style="left:213.1px;background:#fbfbfb;"><div class="a" style="left:2.5px;top:3px;width:2px;height:2px;border-radius:50%;background:#3a8af0"></div><div class="a" style="left:2.5px;top:6.5px;width:2px;height:2px;border-radius:50%;background:#f04040"></div><div class="a" style="left:2.5px;top:10px;width:2px;height:2px;border-radius:50%;background:#f0a030"></div><div class="a" style="left:6px;top:3.5px;width:6px;height:0.8px;background:#ccc"></div><div class="a" style="left:6px;top:7px;width:6px;height:0.8px;background:#ccc"></div><div class="a" style="left:6px;top:10.5px;width:6px;height:0.8px;background:#ccc"></div></div>
  <div class="a di" style="left:232.5px;background:linear-gradient(#f8d040 0,#f8d040 22%,#f6f4ee 22%);"><div class="a" style="left:2px;top:6px;width:10.6px;height:0.6px;background:#ddd"></div><div class="a" style="left:2px;top:9px;width:10.6px;height:0.6px;background:#ddd"></div></div>
  <div class="a di" style="left:251.8px;background:#fbfbfb;"><div class="a" style="left:3px;top:3px;width:9px;height:8px;background:#58c0f0;border-radius:2px"></div><div class="a" style="left:2px;top:5px;width:7px;height:7px;border-radius:50%;background:#f05a3a"></div><div class="a" style="left:5px;top:6px;width:6px;height:3px;background:#2050a0;border-radius:1px"></div></div>
  <div class="a di" style="left:271.2px;background:#141414;"><div class="a" style="left:2.5px;top:3.5px;font-size:7px;line-height:8px;color:#fff;font-weight:bold;font-family:'Liberation Sans',sans-serif">&#9679;tv</div></div>
  <div class="a di" style="left:290.5px;background:linear-gradient(#fa5a70,#f02848);"><div class="a" style="left:5px;top:3px;width:1.3px;height:7px;background:#fff"></div><div class="a" style="left:9.5px;top:2.5px;width:1.3px;height:7px;background:#fff"></div><div class="a" style="left:5px;top:2.5px;width:5.8px;height:1.5px;background:#fff"></div><div class="a" style="left:3px;top:8.8px;width:3px;height:2.5px;border-radius:50%;background:#fff"></div><div class="a" style="left:7.5px;top:8.3px;width:3px;height:2.5px;border-radius:50%;background:#fff"></div></div>
  <div class="a di" style="left:309.9px;background:linear-gradient(#3a9cf8,#1a70e0);"><div class="a" style="left:3px;top:3px;width:8.6px;height:5px;background:#f4f4f4"></div><div class="a" style="left:6.5px;top:8px;width:1.6px;height:4px;background:#f4f4f4"></div><div class="a" style="left:4px;top:11.5px;width:6.6px;height:1px;background:#f4f4f4"></div></div>
  <div class="a di" style="left:329.2px;background:linear-gradient(#5ad860,#22b03a);"><div class="a" style="left:3px;top:7px;width:2px;height:5px;background:#f6f6f6"></div><div class="a" style="left:6.3px;top:4px;width:2px;height:8px;background:#f6f6f6"></div><div class="a" style="left:9.6px;top:2.5px;width:2px;height:9.5px;background:#f6f6f6"></div></div>
  <div class="a di" style="left:348.6px;background:linear-gradient(#f8a030,#f07010);"><div class="a" style="left:7px;top:1.5px;width:1.6px;height:11px;background:#fff2d0;transform:rotate(45deg)"></div></div>
  <div class="a di" style="left:367.9px;background:linear-gradient(#30b8f8,#1870e8);"><div class="a" style="left:3.5px;top:2.8px;font-size:10px;line-height:10px;color:#fff;font-family:'Liberation Sans',sans-serif">A</div><div class="a" style="left:2.5px;top:10px;width:9.6px;height:1px;background:#fff"></div></div>
  <div class="a di" style="left:387.3px;background:radial-gradient(#c8c8c8 20%,#3a3a3a 30%,#8a8a8a 45%,#5a5a5a 70%,#a0a0a0);"><div class="a badge" style="left:11px;top:-1.5px"></div></div>
  <div class="a di" style="left:415.6px;background:#f0f0f4;"><div class="a" style="left:6.5px;top:1.5px;width:1.8px;height:11.5px;background:#111;transform:rotate(40deg);border-radius:1px"></div></div>
  <div class="a di" style="left:435.3px;background:#fafafa;"><div class="a" style="left:2.5px;top:3px;font-size:8px;line-height:9px;color:#e02830;font-weight:bold;font-family:'Liberation Sans',sans-serif">W</div></div>
  <div class="a di" style="left:454.4px;background:radial-gradient(#f8d840 55%,#f0f0e8 60%);"><div class="a" style="left:6.5px;top:3px;width:1.5px;height:8px;background:#1a9a50"></div><div class="a" style="left:4px;top:9px;width:3.5px;height:3px;border-radius:50%;background:#1a9a50"></div></div>
  <div class="a di" style="left:474.0px;background:linear-gradient(#44d060,#22b840);"><div class="a" style="left:2px;top:3.5px;width:7px;height:5.5px;border-radius:50%;background:#fff"></div><div class="a" style="left:6px;top:6.5px;width:6px;height:5px;border-radius:50%;background:#fff"></div><div class="a badge" style="left:11px;top:-1.5px"></div></div>
  <div class="a di" style="left:493.0px;background:#fafafa;"><div class="a" style="left:2px;top:5px;width:6px;height:6px;border-radius:50%;border:1.5px solid #2060e0"></div><div class="a" style="left:6px;top:2.5px;width:6px;height:6px;border-radius:50%;border:1.5px solid #30a0f0"></div><div class="a" style="left:7px;top:6.5px;width:5.5px;height:5.5px;border-radius:50%;border:1.5px solid #2a50c8"></div></div>
  <div class="a di" style="left:511.6px;background:#2e0a00;border-radius:1px;box-shadow:inset 0 0 0 0.8px #c85a10"><div class="a" style="left:2px;top:3px;font-size:8.5px;line-height:9px;color:#ff8a10;font-family:'Liberation Sans',sans-serif">Ai</div></div>
  <div class="a" style="left:409px;top:455px;width:0.8px;height:17px;background:rgba(120,90,30,.6)"></div>
  <div class="a" style="left:533.5px;top:455px;width:0.8px;height:17px;background:rgba(120,90,30,.6)"></div>
  <div class="a" style="left:540px;top:455px;width:15px;height:14px;background:#f2f0ec;border-radius:1px"></div><div class="a" style="left:541.5px;top:458px;width:11.5px;height:3px;background:#a02a30;opacity:.75"></div><div class="a" style="left:541.5px;top:463px;width:11.5px;height:3px;background:#8a2a30;opacity:.7"></div>
  <div class="a" style="left:558.5px;top:456px;width:17px;height:13px;background:#f2f2f0;border-radius:1px"></div><div class="a" style="left:569px;top:466px;width:3px;height:3px;background:#40c060;border-radius:50%"></div>
  <div class="a" style="left:578px;top:455.5px;width:16.7px;height:13.5px;background:#eeeeee;border-radius:1px"></div><div class="a" style="left:580px;top:458px;width:5px;height:4px;background:#b0b8c8"></div><div class="a" style="left:589px;top:465px;width:4px;height:4px;background:#40c060;border-radius:1px"></div>
  <div class="a" style="left:600px;top:454px;width:12.5px;height:17px;border-radius:1px 1px 3px 3px;background:linear-gradient(90deg,#c8c8c8,#e8e8e8 50%,#c0c0c0);opacity:.9"></div><div class="a" style="left:599.5px;top:453.5px;width:13.5px;height:2px;border-radius:1px;background:#ddd"></div>
  <div class="a" style="left:26.2px;top:472.5px;width:1.3px;height:1.3px;border-radius:50%;background:#333"></div>
  <div class="a" style="left:64.9px;top:472.5px;width:1.3px;height:1.3px;border-radius:50%;background:#333"></div>
  <div class="a" style="left:422.2px;top:472.5px;width:1.3px;height:1.3px;border-radius:50%;background:#333"></div>
  <div class="a" style="left:441.9px;top:472.5px;width:1.3px;height:1.3px;border-radius:50%;background:#333"></div>
  <div class="a" style="left:461.0px;top:472.5px;width:1.3px;height:1.3px;border-radius:50%;background:#333"></div>
  <div class="a" style="left:480.6px;top:472.5px;width:1.3px;height:1.3px;border-radius:50%;background:#333"></div>
  <div class="a" style="left:499.6px;top:472.5px;width:1.3px;height:1.3px;border-radius:50%;background:#333"></div>
  <div class="a" style="left:518.2px;top:472.5px;width:1.3px;height:1.3px;border-radius:50%;background:#333"></div>
</div>
<div class="a" id="ctrl">
  <div class="a" id="t1">00:20:04</div>
  <div class="a" id="t2">00:21:48</div>
  <div class="a" id="bar"></div>
  <div class="a" id="knob"></div>
  <svg class="a" style="left:0;top:0" width="629" height="85" viewBox="0 476 629 85">
    <path d="M29.5 553.5 Q28 552.8 28 555 V581 L51.5 567 Z" fill="#fff" stroke="#fff" stroke-width="2" stroke-linejoin="round"/>
    <rect x="67.5" y="553" width="4.8" height="20" rx="1" fill="#fff"/>
    <path d="M85 553.5 V578 L72.5 566 Z" fill="#fff" stroke="#fff" stroke-width="1.5" stroke-linejoin="round"/>
    <path d="M109.5 553.5 V578 L122 566 Z" fill="#fff" stroke="#fff" stroke-width="1.5" stroke-linejoin="round"/>
    <rect x="119.5" y="553" width="4.8" height="20" rx="1" fill="#fff"/>
    <g fill="none" stroke="#fff" stroke-width="2.2">
      <path d="M511.8 567 L516.5 556.5 Q518.3 554.2 522 554.2 Q525.7 554.2 527.5 556.5 L532.2 567"/>
      <circle cx="522" cy="560.5" r="3.4"/>
      <path d="M556.2 558.5 H559.8 L565.8 553.4 V575" />
      <path d="M568.8 557.5 Q570.8 560 568.8 562.5 M571.6 555 Q575.2 560 571.6 565"/>
      <path d="M601.3 559 V554.2 H606 M610 554.2 H614.7 V559"/>
    </g>
  </svg>
  <div class="a lbl" style="left:250px">倍速</div>
  <div class="a lbl" style="left:303px">高清</div>
  <div class="a lbl" style="left:354px">字幕</div>
  <div class="a lbl" style="left:407px">音效</div>
  <div class="a lbl" style="left:459px">选集</div>
  <div class="a" id="svip">SVIP</div>
</div>
</body></html>
